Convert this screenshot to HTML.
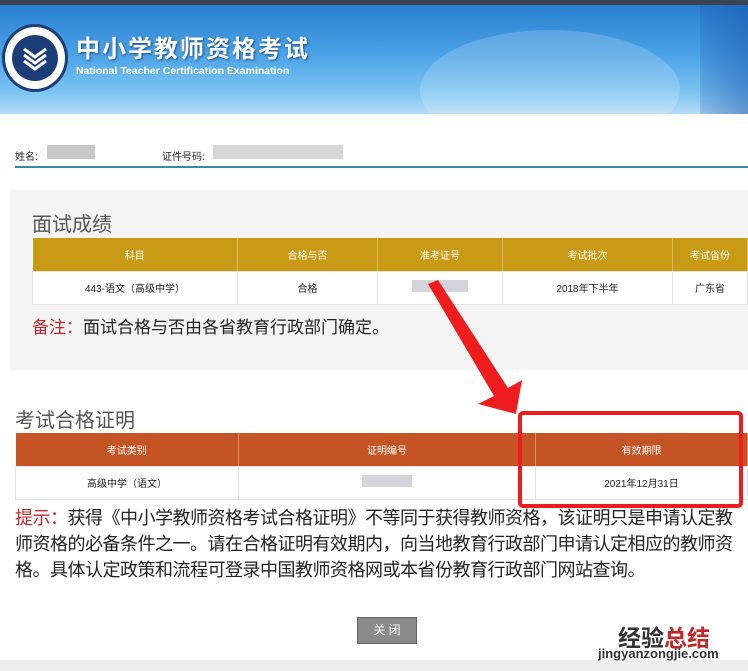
<!DOCTYPE html>
<html><head><meta charset="utf-8"><style>
*{margin:0;padding:0;box-sizing:border-box}
body{width:748px;height:671px;position:relative;overflow:hidden;background:#fff;font-family:"Liberation Sans","Noto Sans CJK SC",sans-serif;color:#222}
.abs{position:absolute}
table{border-collapse:collapse;position:absolute;font-size:10px;text-align:center}
td{border:1px solid #e2e2e2;height:33px}
th{color:#fff;font-weight:normal;height:33px;border-right:1px solid rgba(255,255,255,.35)}
</style></head><body>
<div class="abs" style="left:0;top:0;width:748px;height:5px;background:#3a4450"></div>
<div class="abs" style="left:0;top:5px;width:748px;height:109px;background:linear-gradient(180deg,#2a7fd0 0%,#4aa2e6 45%,#7cc4f2 80%,#b5dcf6 100%)"></div>
<div class="abs" style="left:420px;top:30px;width:260px;height:120px;border-radius:50%;background:rgba(255,255,255,.18)"></div>
<div class="abs" style="left:700px;top:5px;width:48px;height:109px;background:linear-gradient(90deg,rgba(20,80,170,.2),rgba(20,80,170,.5))"></div>
<div class="abs" style="left:2px;top:24px;width:66px;height:68px;border-radius:50%;background:#fff;border:3px solid #1d3d78"></div>
<div class="abs" style="left:12px;top:35px;width:46px;height:46px;border-radius:50%;background:#1d3d78"></div>
<svg class="abs" style="left:20px;top:43px" width="30" height="32"><path d="M4 6 L15 14 L26 6 M4 12 L15 20 L26 12 M4 18 L15 26 L26 18" stroke="#fff" stroke-width="3" fill="none"/></svg>
<div class="abs" style="left:76px;top:36px;line-height:28px;color:#fff;font-size:24px;font-weight:bold;letter-spacing:2px;text-shadow:1px 1px 2px #1a4c8c">中小学教师资格考试</div>
<div class="abs" style="left:76px;top:65px;line-height:12px;color:#fff;font-size:10.5px;font-weight:bold">National Teacher Certification Examination</div>

<div class="abs" style="left:15px;top:148px;font-size:10px">姓名:</div>
<div class="abs" style="left:47px;top:145px;width:48px;height:14px;background:#c8c8c8"></div>
<div class="abs" style="left:162px;top:148px;font-size:10px">证件号码:</div>
<div class="abs" style="left:213px;top:145px;width:130px;height:14px;background:#d6d6d6"></div>
<div class="abs" style="left:15px;top:166px;width:733px;height:2px;background:#3c8a9a"></div>

<div class="abs" style="left:10px;top:190px;width:738px;height:180px;background:#f4f4f4"></div>
<div class="abs" style="left:32px;top:208px;font-size:20px;color:#555">面试成绩</div>
<table style="left:32px;top:238px;width:716px;background:#fff">
<tr style="background:#c99a16"><th style="width:205px">科目</th><th style="width:140px">合格与否</th><th style="width:125px">准考证号</th><th style="width:170px">考试批次</th><th>考试省份</th></tr>
<tr><td>443-语文（高级中学）</td><td>合格</td><td><span style="display:inline-block;width:56px;height:12px;background:#d4d4dc"></span></td><td>2018年下半年</td><td>广东省</td></tr></table>
<div class="abs" style="left:32px;top:313px;font-size:17px"><span style="color:#c0282a">备注：</span>面试合格与否由各省教育行政部门确定。</div>

<div class="abs" style="left:15px;top:404px;font-size:20px;color:#555">考试合格证明</div>
<table style="left:15px;top:433px;width:733px;background:#fff">
<tr style="background:#c55424"><th style="width:223px">考试类别</th><th style="width:297px">证明编号</th><th>有效期限</th></tr>
<tr><td>高级中学（语文）</td><td><span style="display:inline-block;width:50px;height:12px;background:#d4d4dc"></span></td><td>2021年12月31日</td></tr></table>
<div class="abs" style="left:15px;top:505px;width:760px;font-size:18px;line-height:26px;letter-spacing:-0.5px;white-space:nowrap;color:#222"><span style="color:#c0282a">提示：</span>获得《中小学教师资格考试合格证明》不等同于获得教师资格，该证明只是申请认定教<br>师资格的必备条件之一。请在合格证明有效期内，向当地教育行政部门申请认定相应的教师资<br>格。具体认定政策和流程可登录中国教师资格网或本省份教育行政部门网站查询。</div>

<div class="abs" style="left:357px;top:617px;width:60px;height:27px;background:#8a8a8a;border:1px solid #666;color:#fff;font-size:12px;text-align:center;line-height:25px">关 闭</div>
<div class="abs" style="left:0;top:660px;width:748px;height:11px;background:#eeeeee"></div>
<div class="abs" style="left:618px;top:619px;font-size:23px;font-weight:bold;color:#333">经验<span style="color:#c0282a">总结</span></div>
<div class="abs" style="left:598px;top:646px;font-size:13px;font-weight:bold;color:#333">jingyanzongjie.com</div>

<svg class="abs" style="left:0;top:0" width="748" height="671"><polygon points="428,284 438,280 508,388 522,380 516,414 478,404 494,396" fill="#ee1c1c"/><rect x="520" y="413" width="221" height="93" fill="none" stroke="#ee1c1c" stroke-width="4" rx="3"/></svg>
</body></html>
